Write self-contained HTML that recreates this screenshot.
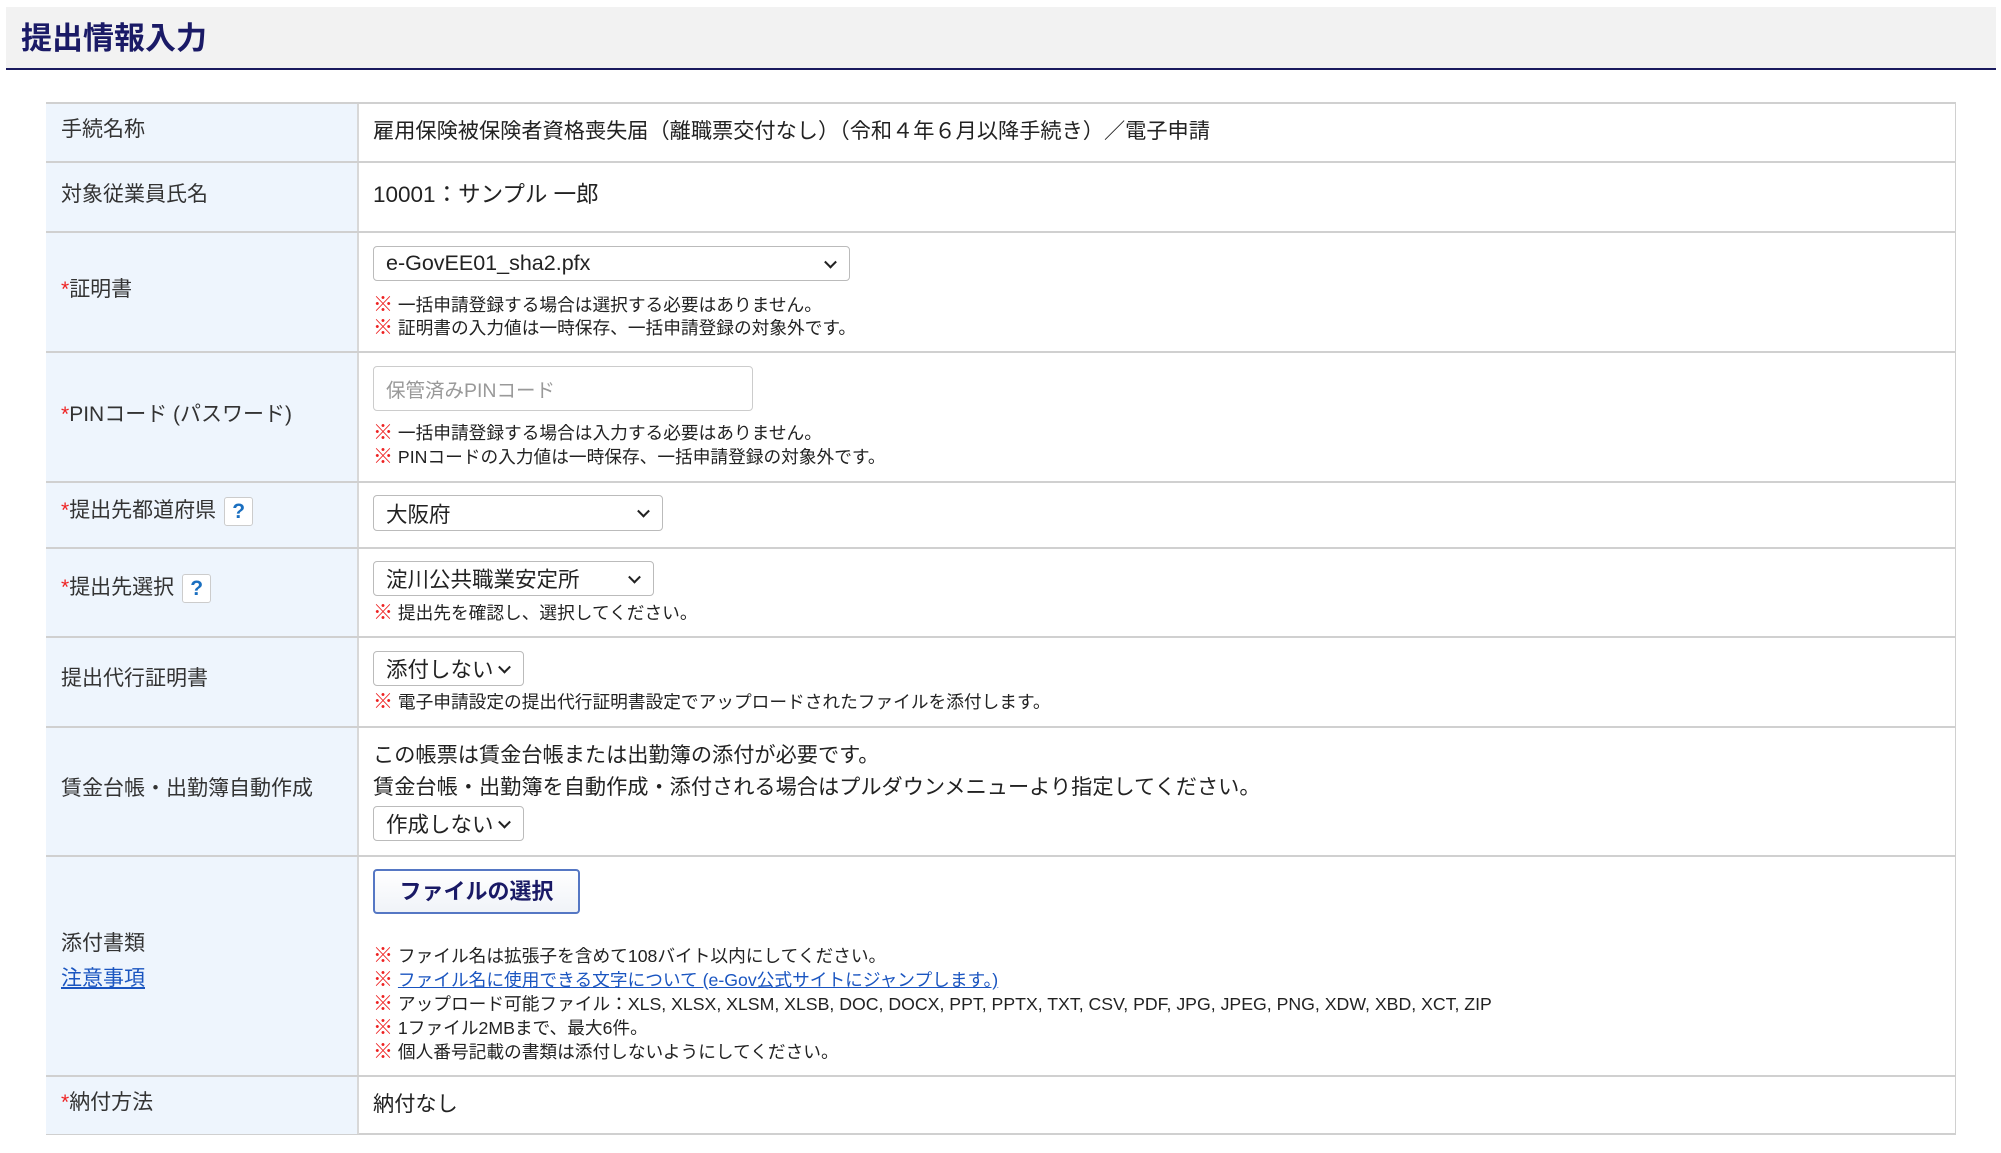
<!DOCTYPE html>
<html><head><meta charset="utf-8"><style>
*{margin:0;padding:0;box-sizing:border-box}
body{width:2001px;height:1153px;background:#fff;font-family:"Liberation Sans","Noto Sans CJK JP",sans-serif;color:#222;position:relative;overflow:hidden}
.hdr{position:absolute;left:6px;top:7px;width:1990px;height:63px;background:#f2f2f2;border-bottom:2px solid #1a1a5e}
.hdr h1{position:absolute;left:15px;top:6px;font-size:31px;font-weight:bold;color:#1a1a66}
.tbl{position:absolute;left:46px;top:102px;width:1910px;height:1033px;border:2px solid #d0d0d0;border-right:1px solid #d0d0d0}
.lab{position:absolute;left:46px;width:313px;background:#eef5fd;border-right:2px solid #d8d8d8}
.row{position:absolute;left:46px;width:1910px;border-top:2px solid #d0d0d0}
.l{position:absolute;left:61px;font-size:21px;color:#333;transform:translateY(-50%);margin-top:-3px}
.l b{color:#e22;font-weight:normal}
.t{position:absolute;left:373px;font-size:21.2px;color:#222;white-space:nowrap;margin-top:-3px}
.n{position:absolute;left:373px;font-size:17.7px;color:#222;white-space:nowrap;margin-top:-3px}
.n i{font-style:normal;color:#e22;font-weight:bold;font-size:20px}
.sel{position:absolute;left:373px;border:1px solid #bbb;border-radius:4px;background:#fff;font-size:21.5px;padding-left:12px;display:flex;align-items:center}
.sel:after{content:"";position:absolute;right:14px;top:50%;width:7px;height:7px;border-right:2px solid #222;border-bottom:2px solid #222;transform:translateY(-70%) rotate(45deg)}
.sel.np:after{display:none}
.q{display:inline-block;width:29px;height:29px;border:1px solid #ccc;border-radius:3px;background:#fff;color:#1a6fc0;font-weight:bold;text-align:center;line-height:27px;font-size:21px;vertical-align:middle;margin-left:8px}
a{color:#1a55c0}
</style></head><body>
<div class="hdr"><h1>提出情報入力</h1></div>
<div class="tbl"></div>
<div class="lab" style="top:104px;height:1030px"></div>
<div class="row" style="top:161px"></div>
<div class="row" style="top:231px"></div>
<div class="row" style="top:351px"></div>
<div class="row" style="top:481px"></div>
<div class="row" style="top:547px"></div>
<div class="row" style="top:636px"></div>
<div class="row" style="top:726px"></div>
<div class="row" style="top:855px"></div>
<div class="row" style="top:1075px"></div>

<div class="l" style="top:131px">手続名称</div>
<div class="t" style="top:117px">雇用保険被保険者資格喪失届（離職票交付なし）（令和４年６月以降手続き）／電子申請</div>

<div class="l" style="top:196px">対象従業員氏名</div>
<div class="t" style="top:180px;font-size:22.5px">10001：サンプル 一郎</div>

<div class="l" style="top:291px"><b>*</b>証明書</div>
<div class="sel" style="top:246px;width:477px;height:35px">e-GovEE01_sha2.pfx</div>
<div class="n" style="top:291px"><i>※</i> 一括申請登録する場合は選択する必要はありません。</div>
<div class="n" style="top:314px"><i>※</i> 証明書の入力値は一時保存、一括申請登録の対象外です。</div>

<div class="l" style="top:416px"><b>*</b>PINコード (パスワード)</div>
<div class="sel np" style="top:366px;width:380px;height:45px;color:#999;font-size:19.5px;border-color:#ccc">保管済みPINコード</div>
<div class="n" style="top:419px"><i>※</i> 一括申請登録する場合は入力する必要はありません。</div>
<div class="n" style="top:443px"><i>※</i> PINコードの入力値は一時保存、一括申請登録の対象外です。</div>

<div class="l" style="top:513px"><b>*</b>提出先都道府県<span class="q">?</span></div>
<div class="sel" style="top:495px;width:290px;height:36px">大阪府</div>

<div class="l" style="top:590px"><b>*</b>提出先選択<span class="q">?</span></div>
<div class="sel" style="top:561px;width:281px;height:35px">淀川公共職業安定所</div>
<div class="n" style="top:599px"><i>※</i> 提出先を確認し、選択してください。</div>

<div class="l" style="top:680px">提出代行証明書</div>
<div class="sel" style="top:651px;width:151px;height:35px">添付しない</div>
<div class="n" style="top:688px"><i>※</i> 電子申請設定の提出代行証明書設定でアップロードされたファイルを添付します。</div>

<div class="l" style="top:790px">賃金台帳・出勤簿自動作成</div>
<div class="t" style="top:741px">この帳票は賃金台帳または出勤簿の添付が必要です。</div>
<div class="t" style="top:773px">賃金台帳・出勤簿を自動作成・添付される場合はプルダウンメニューより指定してください。</div>
<div class="sel" style="top:806px;width:151px;height:35px">作成しない</div>

<div class="l" style="top:945px">添付書類</div>
<div class="l" style="top:980px"><a href="#">注意事項</a></div>
<div style="position:absolute;left:373px;top:869px;width:207px;height:45px;border:2px solid #5577c4;border-radius:4px;background:linear-gradient(#fff,#f0f3f8);color:#1a1a66;font-weight:bold;font-size:22px;text-align:center;line-height:41px">ファイルの選択</div>
<div class="n" style="top:942px"><i>※</i> ファイル名は拡張子を含めて108バイト以内にしてください。</div>
<div class="n" style="top:966px"><i>※</i> <a href="#">ファイル名に使用できる文字について (e-Gov公式サイトにジャンプします。)</a></div>
<div class="n" style="top:990px"><i>※</i> アップロード可能ファイル：XLS, XLSX, XLSM, XLSB, DOC, DOCX, PPT, PPTX, TXT, CSV, PDF, JPG, JPEG, PNG, XDW, XBD, XCT, ZIP</div>
<div class="n" style="top:1014px"><i>※</i> 1ファイル2MBまで、最大6件。</div>
<div class="n" style="top:1038px"><i>※</i> 個人番号記載の書類は添付しないようにしてください。</div>

<div class="l" style="top:1104px"><b>*</b>納付方法</div>
<div class="t" style="top:1090px">納付なし</div>
</body></html>
